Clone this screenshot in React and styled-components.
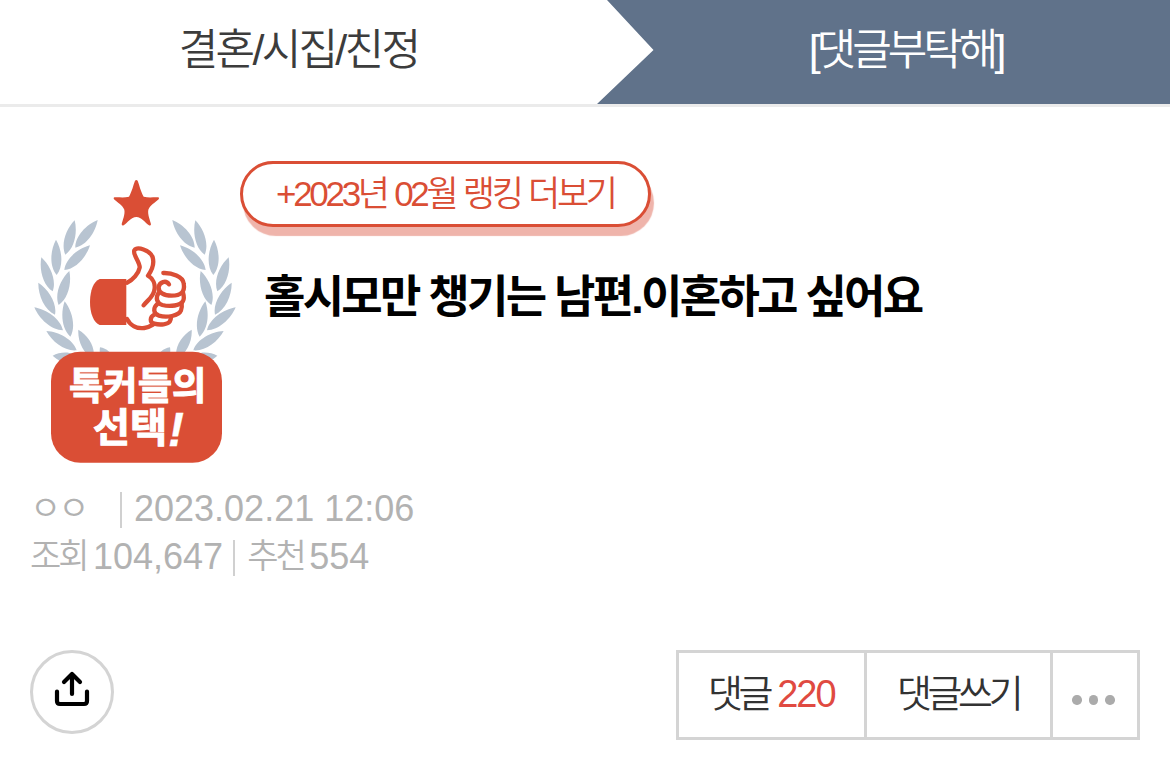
import React from "react";
import styled, { createGlobalStyle } from "styled-components";

const GlobalStyle = createGlobalStyle`
  * { box-sizing: border-box; }
  body {
    margin: 0;
    background: #fff;
    font-family: "Liberation Sans", "Noto Sans CJK KR", sans-serif;
  }
`;

const Page = styled.div`
  width: 1170px;
  height: 774px;
  overflow: hidden;
  background: #fff;
`;

const Header = styled.header`
  display: flex;
  height: 107px;
  border-bottom: 3px solid #ebebeb;
`;

const Tab = styled.div`
  display: flex;
  justify-content: center;
  width: ${(p) => (p.$active ? 573 : 597)}px;
  padding-left: ${(p) => (p.$active ? 44 : 0)}px;
  height: 104px;
  line-height: 101px;
  font-size: 43px;
  font-weight: 350;
  letter-spacing: ${(p) => (p.$active ? -4 : -2.7)}px;
  color: ${(p) => (p.$active ? "#fff" : "#3c3c3c")};
  background: ${(p) => (p.$active ? "#60728a" : "#fff")};
  clip-path: ${(p) => (p.$active ? "polygon(10px 0, 100% 0, 100% 100%, 0 100%, 56.5px 50px)" : "none")};
  white-space: nowrap;
`;

const Article = styled.main`
  padding: 54px 30px 0 20px;
`;

const Intro = styled.section`
  display: flex;
  height: 323px;
`;

const Emblem = styled.svg`
  flex: none;
  width: 230px;
  height: 300px;
  margin: 9px -10px 0 0;
`;

const Heading = styled.div`
  display: flex;
  flex-direction: column;
  align-items: flex-start;
`;

const RankingLink = styled.a`
  width: 411px;
  height: 66px;
  padding-left: 33px;
  border: 3px solid #da4e35;
  border-radius: 33px;
  box-shadow: 3px 9px 1px #efb4ab;
  background: #fff;
  color: #da4e35;
  font-size: 35px;
  font-weight: 350;
  line-height: 60px;
  letter-spacing: -3.3px;
  word-spacing: 1px;
  white-space: nowrap;
`;

const Title = styled.h1`
  margin: 38px 0 0 24px;
  font-size: 45px;
  line-height: 66px;
  font-weight: 700;
  letter-spacing: -2.75px;
  color: #000;
  white-space: nowrap;
`;

const Meta = styled.div`
  display: flex;
  align-items: center;
  height: 48px;
  padding-left: 10px;
  font-size: 36px;
  color: #b2b2b2;
  white-space: nowrap;
`;

const MetaLabel = styled.span`
  font-size: 34px;
  font-weight: 350;
  line-height: 50px;
  letter-spacing: -3px;
  width: ${(p) => p.$w}px;
`;

const MetaValue = styled.span`
  line-height: 48px;
  padding-top: 2px;
`;

const Divider = styled.i`
  width: 2px;
  height: 36px;
  margin: 4px ${(p) => p.$right}px 0 ${(p) => p.$left}px;
  background: #d0d0d0;
`;

const Actions = styled.div`
  display: flex;
  justify-content: space-between;
  align-items: flex-start;
  margin-top: 70px;
  padding-left: 10px;
`;

const ShareButton = styled.button`
  width: 84px;
  height: 84px;
  padding: 0;
  border: 3px solid #d4d4d4;
  border-radius: 50%;
  background: #fff;
  svg { display: block; width: 78px; height: 78px; }
`;

const ButtonGroup = styled.div`
  display: flex;
  height: 90px;
  border: 3px solid #d4d4d4;
`;

const GroupButton = styled.button`
  display: flex;
  width: ${(p) => p.$w}px;
  height: 84px;
  padding: 0 0 0 ${(p) => p.$pad}px;
  border: 0;
  border-left: ${(p) => (p.$first ? 0 : 3)}px solid #d4d4d4;
  background: #fff;
  color: #333;
  font-family: inherit;
  font-size: 38px;
  font-weight: 350;
  line-height: 82px;
  letter-spacing: -4.4px;
  white-space: nowrap;
`;

const Count = styled.span`
  margin-left: 8px;
  font-size: 38px;
  line-height: 83px;
  letter-spacing: -2px;
  color: #e04a41;
`;

const Dots = styled.span`
  display: flex;
  gap: 7px;
  padding-top: 42px;
`;

const Dot = styled.i`
  width: 9.5px;
  height: 9.5px;
  border-radius: 50%;
  background: #ababab;
`;

const LEAVES = [
  [233, 150, 166, 233],
  [164, 151, 136, 254],
  [210, 226, 133, 300],
  [108, 209, 110, 315],
  [64, 262, 98, 364],
  [148, 303, 116, 405],
  [55, 338, 105, 434],
  [134, 394, 151, 500],
  [43, 412, 129, 481],
  [79, 483, 170, 541],
  [175, 479, 220, 564],
  [98, 557, 180, 568],
  [240, 532, 274, 580],
];

function leafPath([x1, y1, x2, y2]) {
  const dx = x2 - x1;
  const dy = y2 - y1;
  const len = Math.hypot(dx, dy);
  const nx = (-dy / len) * 20;
  const ny = (dx / len) * 20;
  const at = (t, s) => `${x1 + dx * t + nx * s} ${y1 + dy * t + ny * s}`;
  return `M${x1} ${y1}C${at(0.3, 0.9)} ${at(0.75, 1.1)} ${x2} ${y2}C${at(0.75, -1.1)} ${at(0.3, -0.9)} ${x1} ${y1}Z`;
}

const leaves = LEAVES.map(leafPath).join("");

function PickEmblem() {
  return (
    <Emblem viewBox="0 0 690 900">
      <g fill="#b8c4d1">
        <path d={leaves} />
        <path d={leaves} transform="translate(690 0) scale(-1 1)" />
      </g>
      <path
        fill="#da4e35"
        d="M345 32Q349 28 353 32C359 48 361 61 371 80C386 84 401 81 415 82Q419 84 416 88C404 99 391 105 385 119C382 134 391 151 393 163Q392 168 387 166C375 158 365 141 349 141C333 141 323 158 311 166Q306 168 305 163C307 151 316 134 313 119C307 105 294 99 282 88Q279 84 283 82C297 81 312 84 327 80C337 61 339 48 345 32Z"
      />
      <path fill="#da4e35" d="M239 327H319V465H239C221 458 210 430 210 396C210 362 221 334 239 327Z" />
      <g fill="none" stroke="#da4e35" strokeWidth="13" strokeLinecap="round" strokeLinejoin="round">
        <path d="M321 338C338 331 356 310 359 293C361 277 337 253 343 241C351 229 390 239 398 262C403 280 395 302 384 317C399 326 407 343 403 361C399 382 382 391 371 406" />
        <path d="M321 447C331 466 350 477 373 474C385 473 392 468 402 462" />
        <path d="M430 309C455 308 489 319 491 340C496 366 482 377 455 377C431 377 415 367 416 352C418 336 438 329 447 343" />
        <path d="M416 368C406 384 410 400 427 405C450 411 482 407 489 393C493 386 492 378 489 368" />
        <path d="M414 400C398 413 399 431 417 437C440 444 476 438 483 421C486 413 486 407 485 400" />
        <path d="M404 433C388 441 389 458 403 461C421 466 444 463 449 455C452 449 453 446 453 442" />
      </g>
      <rect x="93" y="545" width="513" height="333" rx="88" fill="#da4e35" />
      <g fill="#fff" stroke="#fff" strokeWidth="3" fontFamily='"Noto Sans CJK KR", sans-serif' fontWeight="700">
        <text x="147" y="686" fontSize="114" textLength="412" lengthAdjust="spacingAndGlyphs">톡커들의</text>
        <text x="218" y="815" fontSize="118" textLength="224" lengthAdjust="spacingAndGlyphs">선택</text>
        <text x="444" y="827" fontSize="144" fontFamily='"Liberation Sans", sans-serif' fontStyle="italic" strokeWidth="1">!</text>
      </g>
    </Emblem>
  );
}

export default function App() {
  return (
    <Page>
      <GlobalStyle />
      <Header>
        <Tab>결혼/시집/친정</Tab>
        <Tab $active>[댓글부탁해]</Tab>
      </Header>
      <Article>
        <Intro>
          <PickEmblem />
          <Heading>
            <RankingLink>+2023년 02월 랭킹 더보기</RankingLink>
            <Title>홀시모만 챙기는 남편.이혼하고 싶어요</Title>
          </Heading>
        </Intro>
        <Meta>
          <MetaLabel $w={60}>ㅇㅇ</MetaLabel>
          <Divider $left={30} $right={12} />
          <MetaValue>2023.02.21 12:06</MetaValue>
        </Meta>
        <Meta>
          <MetaLabel $w={63}>조회</MetaLabel>
          <MetaValue>104,647</MetaValue>
          <Divider $left={10} $right={12} />
          <MetaLabel $w={62}>추천</MetaLabel>
          <MetaValue>554</MetaValue>
        </Meta>
        <Actions>
          <ShareButton aria-label="공유">
            <svg viewBox="0 0 78 78" fill="none" stroke="#000" strokeWidth="4.2" strokeLinecap="round" strokeLinejoin="round">
              <path d="M39 41V21M31 29L39 21L47 29M24 38.5V48Q24 51 27 51H51Q54 51 54 48V38.5" />
            </svg>
          </ShareButton>
          <ButtonGroup>
            <GroupButton $first $w={185} $pad={29}>
              댓글<Count>220</Count>
            </GroupButton>
            <GroupButton $w={186} $pad={30}>댓글쓰기</GroupButton>
            <GroupButton $w={87} $pad={19} aria-label="더보기">
              <Dots><Dot /><Dot /><Dot /></Dots>
            </GroupButton>
          </ButtonGroup>
        </Actions>
      </Article>
    </Page>
  );
}
